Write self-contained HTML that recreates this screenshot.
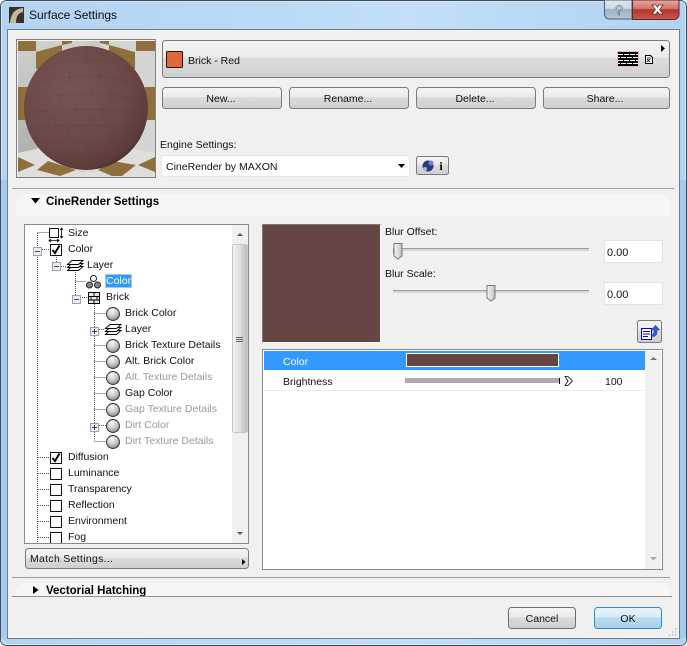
<!DOCTYPE html>
<html><head><meta charset="utf-8"><title>Surface Settings</title>
<style>
html,body{margin:0;padding:0;background:#fff}
svg{display:block}
text{font-family:"Liberation Sans",sans-serif;font-size:10.5px;fill:#111}
.b{font-weight:bold;font-size:11.5px;fill:#000}
.g{fill:#999}
.w{fill:#fff}
</style></head><body>
<svg width="687" height="646" viewBox="0 0 687 646" xmlns="http://www.w3.org/2000/svg">
<defs>
<linearGradient id="sky" x1="0" y1="0" x2="1" y2="0"><stop offset="0" stop-color="#b4d3f0"/><stop offset=".3" stop-color="#b9d8f5"/><stop offset=".6" stop-color="#c2def8"/><stop offset="1" stop-color="#b2d2f0"/></linearGradient>
<linearGradient id="btn" x1="0" y1="0" x2="0" y2="1"><stop offset="0" stop-color="#f4f4f4"/><stop offset=".45" stop-color="#ebebeb"/><stop offset=".47" stop-color="#dcdcdc"/><stop offset="1" stop-color="#cfcfcf"/></linearGradient>
<linearGradient id="ok" x1="0" y1="0" x2="0" y2="1"><stop offset="0" stop-color="#e6f3fb"/><stop offset=".45" stop-color="#d8ebf7"/><stop offset=".47" stop-color="#bcdcf0"/><stop offset="1" stop-color="#a8d0ea"/></linearGradient>
<linearGradient id="thumb" x1="0" y1="0" x2="1" y2="0"><stop offset="0" stop-color="#f4f4f4"/><stop offset=".5" stop-color="#dedede"/><stop offset="1" stop-color="#bcbcbc"/></linearGradient>
<linearGradient id="close" x1="0" y1="0" x2="0" y2="1"><stop offset="0" stop-color="#e3aaa3"/><stop offset=".45" stop-color="#d0726a"/><stop offset=".5" stop-color="#b8362c"/><stop offset="1" stop-color="#c9584e"/></linearGradient>
<linearGradient id="help" x1="0" y1="0" x2="0" y2="1"><stop offset="0" stop-color="#dfe8f1"/><stop offset=".45" stop-color="#cbd8e4"/><stop offset=".5" stop-color="#9fb1c3"/><stop offset="1" stop-color="#b5c6d6"/></linearGradient>
<radialGradient id="ball" cx=".38" cy=".34" r=".75"><stop offset="0" stop-color="#775451"/><stop offset=".6" stop-color="#6a4946"/><stop offset=".88" stop-color="#5c3c3a"/><stop offset="1" stop-color="#3f2020"/></radialGradient>
<radialGradient id="sp" cx=".42" cy=".28" r=".8"><stop offset="0" stop-color="#fdfdfd"/><stop offset=".55" stop-color="#c2c2c2"/><stop offset="1" stop-color="#767676"/></radialGradient>
<linearGradient id="wallL" x1="0" y1="0" x2="0" y2="1"><stop offset="0" stop-color="#d0d0ce"/><stop offset="1" stop-color="#b0b0ae"/></linearGradient>
<clipPath id="pv"><rect x="18" y="41" width="137" height="136"/></clipPath>
<clipPath id="ballc"><circle cx="86" cy="108" r="62"/></clipPath>
<clipPath id="tree"><rect x="25" y="225" width="207" height="318"/></clipPath>
<clipPath id="vh"><rect x="10" y="580" width="665" height="16"/></clipPath>
<g id="sph"><circle cx="7" cy="7" r="6.500" fill="url(#sp)" stroke="#2a2a2a" stroke-width=".9"/></g>
<g id="cb"><rect x=".5" y=".5" width="11" height="11" fill="#fff" stroke="#111"/></g>
<g id="ck"><rect x=".5" y=".5" width="11" height="11" fill="#fff" stroke="#111"/><path d="M2.500 6l2.500 3 4.500-7.500" fill="none" stroke="#000" stroke-width="2"/></g>
<g id="minus"><rect x=".5" y=".5" width="8" height="8" fill="#ececec" stroke="#9aa4b0"/><path d="M2 4.500h5" stroke="#3a4a7a"/></g>
<g id="plus"><rect x=".5" y=".5" width="8" height="8" fill="#f0f0f0" stroke="#9aa4b0"/><path d="M2 4.500h5M4.500 2v5" stroke="#2a3a7a"/></g>
<g id="lay" fill="#fff" stroke="#000" stroke-width=".9"><path d="M.5 11.500l4.500-4h11l-4.500 4z"/><path d="M.5 8.500l4.500-4h11l-4.500 4z"/><path d="M.5 5.500l4.500-4h11l-4.500 4z"/></g>
</defs>

<!-- window frame -->
<rect x="0.5" y="0.5" width="686" height="645" rx="6" fill="url(#sky)" stroke="#3f4d5c"/>
<rect x="1.500" y="1.500" width="684" height="643" rx="5" fill="none" stroke="#dcecfa" stroke-opacity=".7"/>
<rect x="1" y="180" width="6" height="458" fill="#a6cbee"/>
<rect x="680" y="180" width="6" height="458" fill="#a6cbee"/>
<rect x="7.500" y="29.500" width="672" height="609" fill="#f0f0f0" stroke="#6f7d8c"/>

<!-- title bar -->
<rect x="9" y="7" width="15" height="16" fill="#3a3228"/>
<path d="M10 23C11 14 14 9 23 8v4c-5 1-7 5-7 11z" fill="#c4b89c"/>
<text x="29" y="19" style="font-size:12px;fill:#0c0c18">Surface Settings</text>
<path d="M604.500 0v14a5 5 0 0 0 5 5H632V0z" fill="url(#help)" stroke="#4d5d6d"/>
<path d="M632.500 0v19.500H674a5 5 0 0 0 5-5V0z" fill="url(#close)" stroke="#5c2b2b"/>
<text x="619" y="15" text-anchor="middle" style="font-size:14px;fill:#fff;stroke:#3a4a5a;stroke-width:.5">?</text>
<path d="M652 5l4 0 1.500 2.500L659 5h4l-3.500 4.500L663 14h-4l-1.500-2.500L656 14h-4l3.500-4.500z" fill="#fff" stroke="#5a2a2a" stroke-width=".7"/>

<!-- preview -->
<rect x="16.500" y="39.500" width="139" height="138" fill="#f4f4f4" stroke="#808080"/>
<g clip-path="url(#pv)">
<rect x="18" y="41" width="137" height="136" fill="#d4d4d2"/>
<rect x="18" y="41" width="69" height="112" fill="url(#wallL)"/>
<path d="M18 41H36V51H18z" fill="#8f6f3c"/>
<path d="M62 41H72V43L62 45z" fill="#8f6f3c"/>
<path d="M100 41H109V45L100 43z" fill="#8f6f3c"/>
<path d="M136 41H155V51H136z" fill="#8f6f3c"/>
<path d="M36 52L62 45V69H36z" fill="#8f6f3c"/>
<path d="M109 45L135 52V69H109z" fill="#8f6f3c"/>
<path d="M18 87H30V120H18z" fill="#8f6f3c"/>
<path d="M145 87H155V120H145z" fill="#8f6f3c"/>
<path d="M86 41H100V70H86z" fill="#c9c9c7"/>
<path d="M18 153L40 148 80 172 60 178H18z" fill="#dededc"/>
<path d="M155 153L130 148 92 172 112 178H155z" fill="#dededc"/>
<path d="M60 172H112V178H60z" fill="#dededc"/>
<path d="M18 157L35 165 18 172z" fill="#8f6f3c"/>
<path d="M37 170L48 161 76 170 60 176z" fill="#8f6f3c"/>
<path d="M155 157L138 165 155 172z" fill="#8f6f3c"/>
<path d="M98 170L112 161 136 165 122 176 112 176z" fill="#8f6f3c"/>
</g>
<circle cx="86" cy="108" r="62" fill="url(#ball)"/>
<g clip-path="url(#ballc)" fill="none" stroke="#4f3230" stroke-width=".6" stroke-dasharray="9 1 5 1" stroke-opacity=".4">
<path d="M50 66Q86 52 122 66M36 84Q86 68 136 84M27 100Q86 88 145 100M25 113Q86 106 147 113M28 127Q86 124 144 127M36 142Q86 142 136 142M50 157Q86 158 122 157"/>
<path d="M86 50v10M70 72v10M100 70v12M60 92v10M92 88v10M112 90v12M75 106v10M104 107v10M55 115v12M90 116v10M68 126v14M112 127v14M86 142v14" stroke-dasharray="none"/>
</g>

<!-- top bar -->
<rect x="162.500" y="40.500" width="507" height="37" rx="3" fill="url(#btn)" stroke="#7b7b7b"/>
<rect x="166.500" y="51.500" width="16" height="16" rx="1" fill="#e0673a" stroke="#1a1a1a"/>
<text x="188" y="64">Brick - Red</text>
<rect x="617.500" y="51.500" width="21" height="15" fill="#000" stroke="#f3b7b7"/>
<path d="M618 54.500h20M618 60.500h20" stroke="#fff" stroke-dasharray="5 1"/>
<path d="M618 57.500h20M618 63.500h20" stroke="#fff" stroke-dasharray="2 1 5 1 5 1 5 1"/>
<path d="M645.500 55.500h5l2 2v6h-7z" fill="#fff" stroke="#000"/>
<path d="M647 58h4M647 62l3-3M647 59l3 3" stroke="#000" stroke-width=".8"/>
<path d="M661 45l4 3.500-4 3.500z" fill="#000"/>

<!-- buttons -->
<rect x="162.500" y="87.500" width="119" height="21" rx="3" fill="url(#btn)" stroke="#7b7b7b"/>
<text x="221" y="102" text-anchor="middle">New...</text>
<rect x="289.500" y="87.500" width="119" height="21" rx="3" fill="url(#btn)" stroke="#7b7b7b"/>
<text x="348" y="102" text-anchor="middle">Rename...</text>
<rect x="416.500" y="87.500" width="119" height="21" rx="3" fill="url(#btn)" stroke="#7b7b7b"/>
<text x="475" y="102" text-anchor="middle">Delete...</text>
<rect x="543.500" y="87.500" width="126" height="21" rx="3" fill="url(#btn)" stroke="#7b7b7b"/>
<text x="605" y="102" text-anchor="middle">Share...</text>

<text x="160" y="148">Engine Settings:</text>
<rect x="161.500" y="155.500" width="248" height="21" rx="2" fill="#fff" stroke="#e2e6ea"/>
<text x="166" y="170">CineRender by MAXON</text>
<path d="M398 164h7l-3.500 4z" fill="#000"/>
<rect x="416.500" y="156.500" width="32" height="18" rx="2" fill="url(#btn)" stroke="#7b7b7b"/>
<circle cx="428" cy="166" r="5.500" fill="#2b3a7c"/><circle cx="431" cy="163" r="2.500" fill="#6f86c8"/><circle cx="425" cy="169" r="2" fill="#aab4d8"/>
<text x="441" y="170" text-anchor="middle" style="font-family:'Liberation Serif',serif;font-weight:bold;font-size:12px;fill:#000">i</text>

<path d="M12 188.500H674" stroke="#a0a0a0"/>
<rect x="16" y="194" width="655" height="30" rx="10" fill="#f6f6f6"/>
<rect x="10" y="216" width="668" height="360" fill="#f0f0f0"/>
<path d="M31 198h9l-4.500 5.500z" fill="#000"/>
<text x="46" y="205" class="b">CineRender Settings</text>

<!-- tree -->
<rect x="24.500" y="224.500" width="224" height="319" fill="#fff" stroke="#8a8a8a"/>
<g clip-path="url(#tree)">
<g stroke="#555" stroke-dasharray="1 1" fill="none">
<path d="M37.500 233V543M37.500 232.500H49M42 249.500H50M56.500 257V262M61 266.500H67M75.500 270V296M75.500 281.500H86M80 297.500H88M94.500 304V440.500M94.500 313.500H106M99 329.500H104M94.500 345.500H106M94.500 361.500H106M94.500 377.500H106M94.500 393.500H106M94.500 409.500H106M99 425.500H106M94.500 441.500H106M38 457.500H50M38 473.500H50M38 489.500H50M38 505.500H50M38 521.500H50M38 537.500H50"/>
</g>
<rect x="49.500" y="228.500" width="9" height="9" fill="#fff" stroke="#111"/>
<path d="M61.500 228v10M60 230l1.500-2 1.500 2M60 236l1.500 2 1.500-2M49 240.500h10M51 239l-2 1.500 2 1.500M57 239l2 1.500-2 1.500" stroke="#000" fill="none" stroke-width=".8"/>
<use href="#minus" x="33" y="247"/><use href="#ck" x="50" y="244"/>
<use href="#minus" x="52" y="262"/><use href="#lay" x="67" y="259"/>
<circle cx="93.500" cy="278.500" r="3" fill="#fff" stroke="#222"/><circle cx="89.500" cy="285" r="3" fill="#888" stroke="#222"/><circle cx="97.500" cy="285" r="3" fill="#888" stroke="#222"/>
<rect x="105" y="274" width="27" height="14" fill="#3399ff"/>
<rect x="105.500" y="274.500" width="26" height="13" fill="none" stroke="#fff" stroke-dasharray="1 1"/>
<use href="#minus" x="72" y="295"/>
<rect x="88.500" y="292.500" width="11" height="11" fill="#e6e6e6" stroke="#000"/>
<path d="M88.500 296.500h11M88.500 300h11M94 292.500v4M91 296.500v3.500M97 296.500v3.500M94 300v3.500" stroke="#000" stroke-width=".9"/>
<use href="#sph" x="106" y="307"/>
<use href="#plus" x="90" y="327"/><use href="#lay" x="105" y="323"/>
<use href="#sph" x="106" y="339"/><use href="#sph" x="106" y="355"/><use href="#sph" x="106" y="371"/><use href="#sph" x="106" y="387"/><use href="#sph" x="106" y="403"/>
<use href="#plus" x="90" y="423"/><use href="#sph" x="106" y="419"/><use href="#sph" x="106" y="435"/>
<use href="#ck" x="50" y="452"/><use href="#cb" x="50" y="468"/><use href="#cb" x="50" y="484"/><use href="#cb" x="50" y="500"/><use href="#cb" x="50" y="516"/><use href="#cb" x="50" y="532"/>
<text x="68" y="236">Size</text>
<text x="68" y="252">Color</text>
<text x="87" y="268">Layer</text>
<text x="106" y="284" class="w">Color</text>
<text x="106" y="300">Brick</text>
<text x="125" y="316">Brick Color</text>
<text x="125" y="332">Layer</text>
<text x="125" y="348">Brick Texture Details</text>
<text x="125" y="364">Alt. Brick Color</text>
<text x="125" y="380" class="g">Alt. Texture Details</text>
<text x="125" y="396">Gap Color</text>
<text x="125" y="412" class="g">Gap Texture Details</text>
<text x="125" y="428" class="g">Dirt Color</text>
<text x="125" y="444" class="g">Dirt Texture Details</text>
<text x="68" y="460">Diffusion</text>
<text x="68" y="476">Luminance</text>
<text x="68" y="492">Transparency</text>
<text x="68" y="508">Reflection</text>
<text x="68" y="524">Environment</text>
<text x="68" y="540">Fog</text>
</g>
<rect x="232" y="225" width="16" height="318" fill="#f0f0f0"/>
<rect x="232.500" y="244.500" width="15" height="188" rx="2" fill="url(#thumb)" stroke="#c8c8c8"/>
<path d="M236 337.500h7M236 339.500h7M236 341.500h7" stroke="#666"/>
<path d="M237 236l3-3 3 3z" fill="#555"/><path d="M237 532l3 3 3-3z" fill="#555"/>

<rect x="25.500" y="548.500" width="223" height="20" rx="3" fill="url(#btn)" stroke="#7b7b7b"/>
<text x="30" y="562" style="letter-spacing:.3px">Match Settings...</text>
<path d="M242 559l3.500 3-3.500 3z" fill="#000"/>

<!-- colour well + sliders -->
<rect x="262.500" y="224.500" width="118" height="118" fill="#654642" stroke="#f8f8f8"/>
<path d="M262.500 224.500h118" stroke="#7a7a7a"/><path d="M262.500 224.500v118" stroke="#7a7a7a"/>
<text x="385" y="235">Blur Offset:</text>
<rect x="393" y="248" width="196" height="3" fill="#d4d8d4" stroke="none"/>
<path d="M393.500 254v-5M393 248.500h196" stroke="#9aa09a"/>
<path d="M394 243.500h8v12.500l-4 3-4-3z" fill="url(#thumb)" stroke="#777"/>
<rect x="604.500" y="240.500" width="58" height="22" fill="#fff" stroke="#dfe3e8"/>
<text x="607" y="256" style="font-size:11px">0.00</text>
<text x="385" y="277">Blur Scale:</text>
<rect x="393" y="290" width="196" height="3" fill="#d4d8d4"/>
<path d="M393 290.500h196" stroke="#9aa09a"/>
<path d="M487 285.500h8v12.500l-4 3-4-3z" fill="url(#thumb)" stroke="#777"/>
<rect x="604.500" y="282.500" width="58" height="22" fill="#fff" stroke="#dfe3e8"/>
<text x="607" y="298" style="font-size:11px">0.00</text>
<rect x="637.500" y="320.500" width="24" height="22" rx="2" fill="url(#btn)" stroke="#7b7b7b"/>
<rect x="641.500" y="328.500" width="10" height="11" fill="#fff" stroke="#0000cc"/>
<path d="M643 331.500h7M643 334h7M643 336.500h5" stroke="#0000cc"/>
<path d="M651 335c2 0 3-1 3-4v-1h-2.500l4-4.500 4 4.500H657v2c0 3-2 4.500-4 4.500z" fill="#2a5fe0" stroke="#1540a8" stroke-width=".6"/>

<!-- property table -->
<rect x="262.500" y="349.500" width="400" height="220" fill="#fff" stroke="#8a8a8a"/>
<rect x="264" y="351" width="381" height="19" fill="#3399ff"/>
<text x="283" y="365" class="w">Color</text>
<rect x="406.500" y="353.500" width="152" height="13" fill="#654642" stroke="#fff"/>
<text x="283" y="385">Brightness</text>
<rect x="405" y="378" width="154" height="5" fill="#acacac"/>
<path d="M559.500 378v6" stroke="#000"/>
<path d="M565 376.500l3 0 4.500 4.500-4.500 4.500-3 0 3-4.500z" fill="#fff" stroke="#000" stroke-width=".8"/>
<text x="605" y="385">100</text>
<path d="M264 390.500H644" stroke="#ececec"/>
<rect x="645" y="351" width="16" height="218" fill="#f0f0f0"/>
<path d="M650 360l3.500-3 3.500 3z" fill="#777"/><path d="M650 557l3.500 3.500 3.500-3.500z" fill="#aaa"/>

<!-- bottom -->
<path d="M12 577.500H670" stroke="#a0a0a0"/>
<g clip-path="url(#vh)"><rect x="16" y="583" width="654" height="30" rx="9" fill="#f6f6f6"/></g>
<path d="M33 586l5.500 4-5.500 4z" fill="#000"/>
<text x="46" y="594" class="b">Vectorial Hatching</text>
<path d="M12 596.500H672" stroke="#8e8e8e"/>
<rect x="508.500" y="607.500" width="67" height="21" rx="3" fill="url(#btn)" stroke="#6e6e6e"/>
<text x="542" y="622" text-anchor="middle">Cancel</text>
<rect x="594.500" y="607.500" width="67" height="21" rx="3" fill="url(#ok)" stroke="#2b8ad0"/>
<text x="628" y="622" text-anchor="middle">OK</text>
<path d="M675 635h1M672 635h1M669 635h1M675 632h1M672 632h1M675 629h1" stroke="#9a9a9a"/>
</svg>
</body></html>
